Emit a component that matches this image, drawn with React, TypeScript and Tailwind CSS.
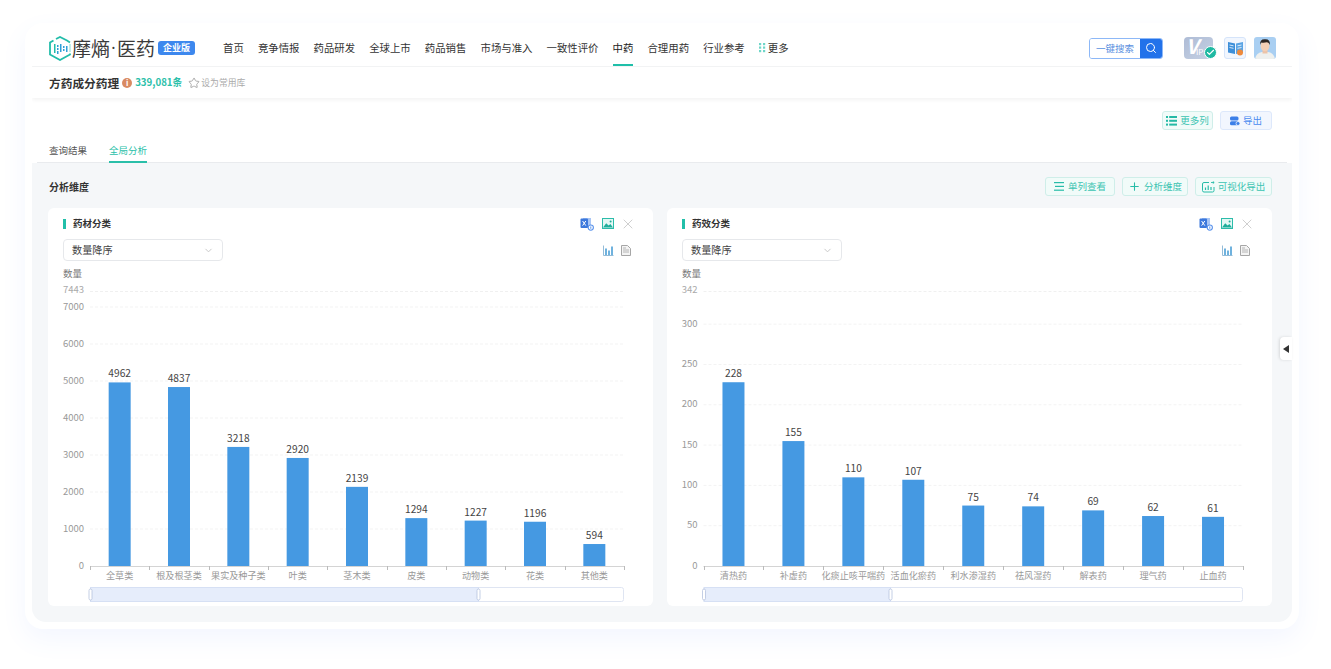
import React from "react";
import { Search, Star, ChevronDown, Plus, X, Check } from "lucide-react";

const NAV: [string, boolean?][] = [
  ["首页"], ["竞争情报"], ["药品研发"], ["全球上市"], ["药品销售"], ["市场与准入"],
  ["一致性评价"], ["中药", true], ["合理用药"], ["行业参考"],
];

function Logo() {
  return (
    <svg width="22" height="25" viewBox="0 0 22 25" fill="none">
      <path d="M7 3 L11 1 L18 4.5 L21 6.5 M21 17.5 V18.5 L11 24 L1 18.5 V6.5 L4.5 4.5" stroke="#23bdaa" strokeWidth="1.8" />
      <path d="M21 8 V16" stroke="#23bdaa" strokeWidth="1.8" opacity=".3" />
      <g fill="#2f9fd8">
        <rect x="5" y="8" width="1.5" height="9" fill="#23bdaa" />
        <rect x="8" y="9" width="1.5" height="2" />
        <rect x="8" y="12" width="1.5" height="2" />
        <rect x="8" y="15" width="1.5" height="3" />
        <rect x="11" y="8" width="1.5" height="8" />
        <rect x="14" y="10" width="1.5" height="2" />
        <rect x="14" y="13" width="1.5" height="2" />
        <rect x="17" y="10" width="1.5" height="6" />
      </g>
    </svg>
  );
}

function GridDots() {
  return (
    <svg width="7" height="10" viewBox="0 0 7 10" fill="#6fd6c8">
      {[0, 4].map((x) => [0, 3.5, 7].map((y) => <rect key={`${x}${y}`} x={x} y={y} width="2.2" height="2.2" />))}
    </svg>
  );
}

function ExcelIcon() {
  return (
    <svg width="14" height="14" viewBox="0 0 14 14">
      <rect x="3" y="1" width="8" height="10" fill="#a9c6f5" />
      <rect x="0.5" y="1.5" width="7.5" height="9.5" rx="1" fill="#3c78dc" />
      <path d="M2.6 4 L5.8 8.6 M5.8 4 L2.6 8.6" stroke="#fff" strokeWidth="1" />
      <circle cx="10.8" cy="10.6" r="2.6" fill="#fff" stroke="#5c94ec" strokeWidth="1.1" />
      <rect x="10.3" y="9.4" width="1" height="2.4" fill="#5c94ec" />
    </svg>
  );
}

function ImageIcon() {
  return (
    <svg width="12" height="11" viewBox="0 0 12 11">
      <rect x="0.5" y="0.5" width="11" height="10" fill="#e4f7f4" stroke="#2cbcaa" />
      <path d="M1 9.5 L4.2 5.2 L6.6 7.6 L8.4 6 L11 9.5Z" fill="#1fae9b" />
      <circle cx="8.6" cy="3.4" r="1" fill="#1fae9b" />
    </svg>
  );
}

function BarsIcon() {
  return (
    <svg width="11" height="11" viewBox="0 0 11 11">
      <path d="M0.5 0.5 V10.5 H10.5" stroke="#94bcd8" fill="none" />
      <rect x="2" y="3.5" width="2" height="6.5" fill="#6fb2de" />
      <rect x="5" y="5.5" width="2" height="4.5" fill="#6fb2de" />
      <rect x="8" y="1.5" width="2" height="8.5" fill="#6fb2de" />
    </svg>
  );
}

function DocIcon() {
  return (
    <svg width="10" height="11" viewBox="0 0 10 11" fill="none" stroke="#a6a6a6">
      <path d="M0.5 0.5 H6.5 L9.5 3.5 V10.5 H0.5 Z" fill="#f4f4f4" />
      <path d="M2 5 H8 M2 7 H8 M2 3 H5" strokeWidth=".8" />
    </svg>
  );
}

function ExportChartIcon() {
  return (
    <svg width="13" height="12" viewBox="0 0 13 12" fill="none" stroke="#27bca8">
      <path d="M7 1.5 H2 Q0.5 1.5 0.5 3 V9.5 Q0.5 11 2 11 H10.5 Q12 11 12 9.5 V6" />
      <path d="M3.5 9 V6.5 M6.2 9 V4.5 M9 9 V6" strokeWidth="1.2" />
      <path d="M9 1.5 H12 M10.8 0.4 L12.2 1.5 L10.8 2.6" strokeWidth=".9" />
    </svg>
  );
}

function VipIcon() {
  return (
    <div className="relative w-[29px] h-[22px] rounded-[4px] bg-gradient-to-br from-[#aebcd6] to-[#c6d1e3]">
      <span className="absolute left-[2px] top-[-3px] text-[20px] leading-[24px] font-bold italic text-white">V</span>
      <span className="absolute left-[12px] top-[10px] text-[8px] leading-[10px] text-white">IP</span>
      <span className="absolute left-[20px] top-[9px] w-[13px] h-[13px] rounded-full bg-[#1fb9a2] border border-white flex items-center justify-center">
        <Check size={9} strokeWidth={3} color="#fff" />
      </span>
    </div>
  );
}

function BookIcon() {
  return (
    <div className="w-[22px] h-[22px] rounded-[3px] bg-[#f1f6fe] border border-[#d5e4fa] flex items-center justify-center">
      <svg width="17" height="16" viewBox="0 0 17 16">
        <path d="M1 2 L8 3.5 V14 L1 12.5Z" fill="#3d8fd9" />
        <path d="M16 2 L9 3.5 V14 L16 12.5Z" fill="#5aa4e4" />
        <path d="M2.5 5 L6.5 5.8 M2.5 7.5 L6.5 8.3 M10.5 5.8 L14.5 5 M10.5 8.3 L14.5 7.5" stroke="#fff" strokeWidth=".8" />
        <circle cx="13" cy="12.6" r="3" fill="#ee8a3c" />
      </svg>
    </div>
  );
}

function Avatar() {
  return (
    <div className="w-[22px] h-[22px] rounded-[3px] overflow-hidden">
      <svg width="22" height="22" viewBox="0 0 22 22">
        <rect width="22" height="22" fill="#a9cff2" />
        <path d="M1 22 Q2 16 8 15 H14 Q20 16 21 22Z" fill="#eef0ee" />
        <rect x="8.5" y="12" width="5" height="4.5" fill="#ecc3a8" />
        <ellipse cx="11" cy="9" rx="4.4" ry="5.2" fill="#f3cfb5" />
        <path d="M6.2 8 Q5.4 2 11 2.2 Q16.6 2 15.8 8 Q15 5.4 13 5.2 Q9.5 6 7.4 5.4 Q6.6 6 6.2 8Z" fill="#2d2622" />
      </svg>
    </div>
  );
}

type ChartProps = {
  x0: number;
  maxLabel: string;
  ticks: number[];
  scale: number;
  data: [string, number][];
  sliderEnd: number;
};

function Chart({ x0, maxLabel, ticks, scale, data, sliderEnd }: ChartProps) {
  const x1 = 576;
  const y0 = 304;
  const step = (x1 - x0) / data.length;
  const topY = 29.5;
  return (
    <svg width="605" height="344" viewBox="0 0 605 344" className="block">
      <text x="15" y="15" fontSize="9.5" fill="#777">数量</text>
      <text x={x0 - 6} y={topY + 1} fontSize="9.5" fill="#aaa" textAnchor="end">{maxLabel}</text>
      <line x1={x0} x2={x1} y1={topY} y2={topY} stroke="#f0f0f0" strokeWidth="1" strokeDasharray="3 2" />
      {ticks.map((t) => {
        const y = y0 - t * scale;
        return (
          <g key={t}>
            <text x={x0 - 6} y={y + 2.5} fontSize="9.5" fill="#999" textAnchor="end">{t}</text>
            {t > 0 && <line x1={x0} x2={x1} y1={y} y2={y} stroke="#f3f3f3" strokeWidth="1" strokeDasharray="3 2" />}
          </g>
        );
      })}
      {data.map(([name, v], i) => {
        const cx = x0 + step * (i + 0.5);
        const h = v * scale;
        return (
          <g key={name}>
            <rect x={cx - 11} y={y0 - h} width="22" height={h} fill="#4599e2" />
            <text x={cx} y={y0 - h - 5} fontSize="10.2" fill="#444" textAnchor="middle">{v}</text>
            <text x={cx} y={y0 + 13} fontSize="9.1" fill="#999" textAnchor="middle">{name}</text>
          </g>
        );
      })}
      <line x1={x0} x2={x1} y1={y0 + 0.5} y2={y0 + 0.5} stroke="#d4d4d4" />
      {Array.from({ length: data.length + 1 }).map((_, i) => {
        const x = Math.round(x0 + step * i) + 0.5;
        return <line key={i} x1={x} x2={x} y1={y0} y2={y0 + 4} stroke="#bbb" />;
      })}
      <rect x={x0 + 0.5} y="325.5" width={x1 - x0 - 1} height="14" rx="2" fill="#fff" stroke="#dfe5f2" />
      <rect x={x0 + 0.5} y="325.5" width={sliderEnd - x0} height="14" fill="#e6edfb" stroke="#d6e0f4" />
      {[x0 + 0.5, sliderEnd + 0.5].map((x) => (
        <rect key={x} x={x - 1.5} y="327" width="3" height="11" rx="1.5" fill="#fff" stroke="#b5c3de" strokeWidth=".8" />
      ))}
    </svg>
  );
}

function Card({ title, chart }: { title: string; chart: ChartProps }) {
  return (
    <div className="w-[605px] h-[398px] bg-white rounded-[6px] overflow-hidden">
      <div className="flex items-center justify-between h-[31px] pl-[15px] pr-[17px]">
        <div className="flex items-center gap-[7px]">
          <span className="w-[3px] h-[10px] bg-[#22bfa9]" />
          <span className="text-[9.5px] font-bold text-[#333]">{title}</span>
        </div>
        <div className="flex items-center gap-[8px]">
          <ExcelIcon />
          <ImageIcon />
          <X size={16} color="#cfcfcf" strokeWidth={1.5} className="ml-[-2px]" />
        </div>
      </div>
      <div className="flex items-center justify-between h-[22px] pl-[15px] pr-[22px]">
        <div className="w-[160px] h-[22px] border border-[#e6e8eb] rounded-[4px] flex items-center justify-between pl-[8px] pr-[8px]">
          <span className="text-[10.2px] text-[#444]">数量降序</span>
          <ChevronDown size={11} color="#c4c4c4" />
        </div>
        <div className="flex items-center gap-[7px]">
          <BarsIcon />
          <DocIcon />
        </div>
      </div>
      <div className="h-[1px]" />
      <Chart {...chart} />
    </div>
  );
}

function ToolBtn({ w, icon, label, blue, gap }: { w: string; icon: React.ReactNode; label: string; blue?: boolean; gap: string }) {
  return (
    <button
      className={`${w} ${gap} ${blue ? "bg-[#f2f6fe] border-[#dde8fb] text-[#4a8bf0]" : "bg-[#f1fbf9] border-[#cfeee9] text-[#3cc4b2]"} h-[19px] border rounded-[3px] flex items-center justify-center text-[9.5px]`}
    >
      {icon}
      <span>{label}</span>
    </button>
  );
}

function ListIcon() {
  return (
    <svg width="11" height="10" viewBox="0 0 11 10" fill="#24b9a5">
      {[0, 3.8, 7.6].map((y) => (
        <g key={y}>
          <rect x="0" y={y} width="2" height="2" />
          <rect x="3.2" y={y} width="7.8" height="2" />
        </g>
      ))}
    </svg>
  );
}

function LinesIcon() {
  return (
    <svg width="10" height="9" viewBox="0 0 10 9" fill="#27bca8">
      <rect y="0" width="10" height="1.2" />
      <rect x="1" y="3.8" width="9" height="1.2" />
      <rect y="7.6" width="10" height="1.2" />
    </svg>
  );
}

function DbIcon() {
  return (
    <svg width="10" height="10" viewBox="0 0 10 10" fill="#3c7fe8">
      <rect x="0" y="0.5" width="8.5" height="4" rx="1.5" />
      <rect x="0" y="5.2" width="8.5" height="4" rx="1.5" />
      <circle cx="8" cy="7.5" r="2" stroke="#fff" strokeWidth=".7" />
    </svg>
  );
}

export default function App() {
  return (
    <div
      className="w-[1331px] h-[669px] bg-white overflow-hidden relative pt-[23px] pl-[25px]"
      style={{ fontFamily: '"Noto Sans CJK SC", "Noto Sans", sans-serif' }}
    >
      <div className="w-[1274px] h-[606px] p-[7px] rounded-[18px] bg-white shadow-[0_10px_26px_rgba(80,130,255,0.07)]">
        <div className="w-[1260px] h-[592px] bg-white rounded-b-[14px] flex flex-col overflow-hidden">
          {/* Header */}
          <header className="h-[37px] shrink-0 border-b border-[#f3f4f5] flex items-center pl-[17px] pr-[16px]">
            <Logo />
            <span className="ml-[1px] text-[19px] leading-[24px] text-[#3a3a3a] whitespace-nowrap flex items-center w-[88px]">
              摩熵<span className="w-[7px] text-center text-[16px]" style={{ fontFamily: '"Noto Sans", sans-serif' }}>·</span>医药
            </span>
            <span className="ml-[-2px] w-[37px] h-[14px] bg-[#3d88ee] rounded-[3px] text-white text-[9px] font-bold leading-[14px] text-center">企业版</span>
            <nav className="ml-[28px] flex items-stretch h-full gap-[14.1px] text-[10.4px] text-[#333]">
              {NAV.map(([n, a]) => (
                <span key={n} className={`relative flex items-center whitespace-nowrap ${a ? "text-[#222]" : ""}`}>
                  {n}
                  {a && <span className="absolute left-0 right-0 bottom-[0px] h-[2px] bg-[#1fbfa9]" />}
                </span>
              ))}
              <span className="flex items-center gap-[2px] whitespace-nowrap">
                <GridDots />
                更多
              </span>
            </nav>
            <div className="ml-auto flex items-center">
              <div className="w-[74px] h-[21px] border border-[#8db8f7] rounded-[3px] flex overflow-hidden">
                <span className="flex-1 flex items-center justify-center text-[9.5px] text-[#5a8fe0] bg-white">一键搜索</span>
                <span className="w-[22px] bg-[#2272ea] flex items-center justify-center">
                  <Search size={12} color="#fff" strokeWidth={2} />
                </span>
              </div>
              <div className="ml-[21px]"><VipIcon /></div>
              <div className="ml-[11px]"><BookIcon /></div>
              <div className="ml-[8px]"><Avatar /></div>
            </div>
          </header>
          {/* Sub header */}
          <div className="h-[31px] shrink-0 flex items-center pl-[17px] shadow-[0_2px_4px_rgba(0,0,0,0.05)] relative">
            <span className="text-[11.7px] font-bold text-[#333] whitespace-nowrap">方药成分药理</span>
            <span className="ml-[3px] w-[10px] h-[10px] rounded-full bg-[#d98a62] text-white text-[8px] font-bold leading-[10px] text-center">i</span>
            <span className="ml-[3px] text-[9.7px] font-bold text-[#2cbfaa] whitespace-nowrap">339,081条</span>
            <Star size={12} color="#aaa" className="ml-[6px]" />
            <span className="ml-[1px] text-[8.8px] text-[#aaa] whitespace-nowrap">设为常用库</span>
          </div>
          {/* Toolbar */}
          <div className="h-[42px] shrink-0 flex items-start justify-end gap-[7px] pt-[13px] pr-[20px]">
            <ToolBtn w="w-[51px]" gap="gap-[3px]" icon={<ListIcon />} label="更多列" />
            <ToolBtn w="w-[52px]" gap="gap-[3px]" icon={<DbIcon />} label="导出" blue />
          </div>
          {/* Tabs */}
          <div className="h-[23px] shrink-0 mx-[5px] border-b border-[#e9ebee] flex items-stretch gap-[22px] pl-[12px] text-[9.5px]">
            <span className="text-[#555] pt-[3px]">查询结果</span>
            <span className="text-[#2abfa9] pt-[3px] border-b-2 border-[#2abfa9] h-[23px]">全局分析</span>
          </div>
          {/* Analysis */}
          <section className="flex-1 bg-[#f5f7f9] pl-[16px] pr-[20px] flex flex-col">
            <div className="h-[45px] pt-[2px] shrink-0 flex items-center justify-between">
              <span className="text-[10px] font-bold text-[#333] pl-[1px]">分析维度</span>
              <div className="flex items-center gap-[7px]">
                <ToolBtn w="w-[70px]" gap="gap-[4px]" icon={<LinesIcon />} label="单列查看" />
                <ToolBtn w="w-[66px]" gap="gap-[3px]" icon={<Plus size={13} strokeWidth={2} color="#27bca8" />} label="分析维度" />
                <ToolBtn w="w-[77px]" gap="gap-[3px]" icon={<ExportChartIcon />} label="可视化导出" />
              </div>
            </div>
            <div className="flex gap-[14px]">
              <Card
                title="药材分类"
                chart={{
                  x0: 42,
                  maxLabel: "7443",
                  ticks: [0, 1000, 2000, 3000, 4000, 5000, 6000, 7000],
                  scale: 0.037,
                  sliderEnd: 430,
                  data: [["全草类", 4962], ["根及根茎类", 4837], ["果实及种子类", 3218], ["叶类", 2920], ["茎木类", 2139], ["皮类", 1294], ["动物类", 1227], ["花类", 1196], ["其他类", 594]],
                }}
              />
              <Card
                title="药效分类"
                chart={{
                  x0: 36.5,
                  maxLabel: "342",
                  ticks: [0, 50, 100, 150, 200, 250, 300],
                  scale: 0.806,
                  sliderEnd: 223,
                  data: [["清热药", 228], ["补虚药", 155], ["化痰止咳平喘药", 110], ["活血化瘀药", 107], ["利水渗湿药", 75], ["祛风湿药", 74], ["解表药", 69], ["理气药", 62], ["止血药", 61]],
                }}
              />
            </div>
          </section>
        </div>
      </div>
      {/* Side handle */}
      <div className="absolute left-[1280px] top-[337px] w-[12px] h-[23px] bg-white rounded-l-[4px] shadow-[-1px_0_3px_rgba(0,0,0,0.12)] flex items-center justify-center">
        <span className="w-0 h-0 border-y-[4px] border-y-transparent border-r-[6px] border-r-[#333]" />
      </div>
    </div>
  );
}
